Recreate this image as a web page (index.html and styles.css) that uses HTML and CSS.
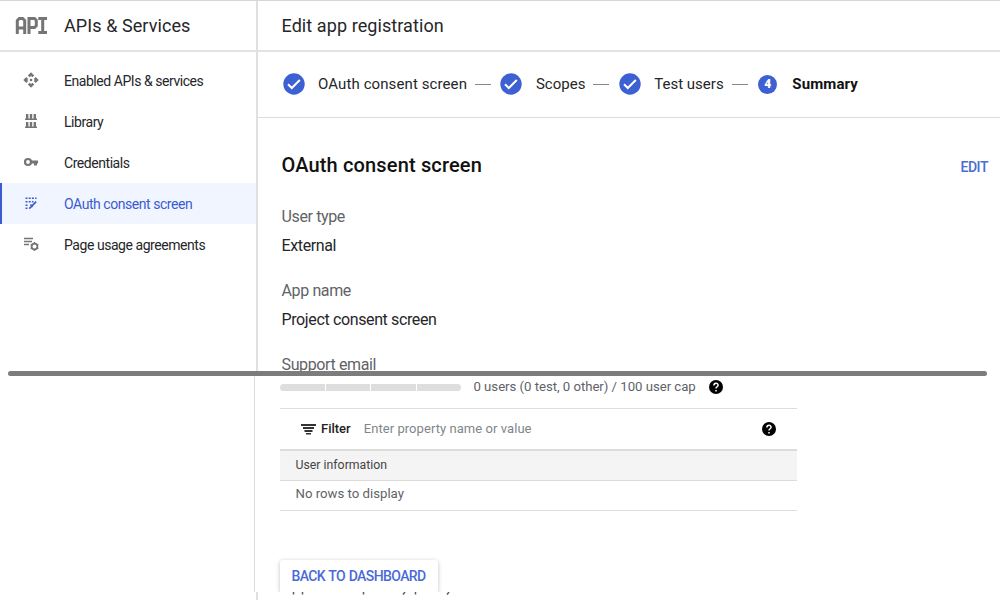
FILE: index.html
```html
<!DOCTYPE html>
<html lang="en">
<head>
<meta charset="utf-8">
<title>Edit app registration</title>
<link rel="stylesheet" href="styles.css">
</head>
<body>
<div class="page">
  <div class="upper">
    <aside class="sidebar">
      <header class="brand">
        <svg class="brand-icon" width="34" height="19" viewBox="0 0 34 19" fill="none" stroke="#757575" stroke-width="3"><path d="M2.300 18V4.500l2-2h3.400l2 2V18M2.300 12h7.400M14 18V2.500h5.500l1.800 1.800v5.400l-1.800 1.800H14M23.300 2.500H32M27.700 2.500v14M23.300 16.500H32"/></svg>
        <span class="brand-name">APIs &amp; Services</span>
      </header>
      <nav class="nav">
        <a class="item"><svg width="16" height="16" viewBox="0 0 16 16" fill="#757575"><path d="M8 .3l3.200 3.200-1.700 1.700L8 3.900 6.500 5.200 4.800 3.500zM8 15.700l3.200-3.200-1.700-1.700L8 12.100l-1.500-1.300-1.700 1.700zM.3 8l3-3 1.900 1.900L4.200 8l1 1.100L3.300 11zM15.700 8l-3-3-1.900 1.900 1 1.100-1 1.100 1.900 1.900z"/><circle cx="8" cy="8" r="1.300"/></svg><span>Enabled APIs &amp; services</span></a>
        <a class="item"><svg width="16" height="16" viewBox="0 0 16 16" fill="#757575"><path d="M3 1h2.400v4.500H3zM6.800 1h2.400v4.500H6.800zM10.600 1H13v4.500h-2.400zM2 5.500h12V7H2zM3 9h2.400v4.500H3zM6.800 9h2.400v4.500H6.800zM10.600 9H13v4.500h-2.400zM2 13.500h12V15H2z"/></svg><span>Library</span></a>
        <a class="item"><svg width="16" height="16" viewBox="0 0 16 16"><circle cx="5" cy="8" r="3" fill="none" stroke="#757575" stroke-width="2.200"/><path d="M8 6.600h7v2.800h-1v2h-3v-2H8z" fill="#757575"/></svg><span>Credentials</span></a>
        <a class="item active"><svg width="16" height="16" viewBox="0 0 16 16" fill="#3c5bd0"><path d="M2.500 2.500h2v1.600h-2zM5.700 2.500h2v1.600h-2zM8.900 2.500h2v1.600h-2zM12.100 2.500h1.500v1.600h-1.500zM2.500 6h2v1.600h-2zM5.700 6h2v1.600h-2zM8.900 6h1.600v1.600H8.900zM2.500 9.400h2V11h-2zM2.500 12.400h2v1.500h-2z"/><path d="M6.300 13.600l6.900-7M7.500 9.500l2 2.500" fill="none" stroke="#3c5bd0" stroke-width="1.600"/></svg><span>OAuth consent screen</span></a>
        <a class="item"><svg width="16" height="16" viewBox="0 0 16 16" fill="none" stroke="#757575" stroke-width="1.500"><path d="M1 2.500h9M1 5.500h8M1 8.500h5"/><circle cx="11.500" cy="10.500" r="2.900" stroke-width="1.800"/><path d="M11.500 6.100v1.600M11.500 13.400v1.700M7.700 8.300l1.400.8M13.900 11.900l1.400.8M7.700 12.700l1.400-.8M13.900 9.100l1.400-.8"/></svg><span>Page usage agreements</span></a>
      </nav>
    </aside>
    <main class="main">
      <header class="title"><span class="title-text">Edit app registration</span></header>
      <div class="stepper">
        <div class="step first"><svg class="dot" viewBox="0 0 22 22"><circle cx="11" cy="11" r="10.700"/><path d="M5 11.200l3.800 3.800 8-8"/></svg><span>OAuth consent screen</span></div>
        <i class="dash"></i>
        <div class="step"><svg class="dot" viewBox="0 0 22 22"><circle cx="11" cy="11" r="10.700"/><path d="M5 11.200l3.800 3.800 8-8"/></svg><span>Scopes</span></div>
        <i class="dash"></i>
        <div class="step"><svg class="dot" viewBox="0 0 22 22"><circle cx="11" cy="11" r="10.700"/><path d="M5 11.200l3.800 3.800 8-8"/></svg><span>Test users</span></div>
        <i class="dash"></i>
        <div class="step current"><b class="number">4</b><span>Summary</span></div>
      </div>
      <section class="details">
        <div class="head"><h2>OAuth consent screen</h2><a class="edit">EDIT</a></div>
        <dl class="fields">
          <dt>User type</dt><dd>External</dd>
          <dt>App name</dt><dd>Project consent screen</dd>
          <dt>Support email</dt>
        </dl>
      </section>
    </main>
  </div>
  <div class="divider"></div>
  <div class="lower">
    <div class="usage">
      <div class="meter"><i></i><i></i><i></i><i></i></div>
      <span>0 users (0 test, 0 other) / 100 user cap</span>
      <svg class="help" viewBox="0 0 14 14"><circle cx="7" cy="7" r="7"/><path d="M4.900 5.500C4.900 2.500 9.100 2.600 9.100 5.200 9.100 6.800 7 6.700 7 8.500"/><path d="M7 9.900v1.600"/></svg>
    </div>
    <div class="table">
      <div class="filter"><svg width="15" height="12" viewBox="0 0 15 12" fill="#333"><path d="M0 1h15v2H0zM2 4h11v2H2zM3.500 7h8v2h-8zM5 10h5v1.500H5z"/></svg><span class="filter-label">Filter</span><span class="filter-hint">Enter property name or value</span><svg class="help" viewBox="0 0 14 14"><circle cx="7" cy="7" r="7"/><path d="M4.900 5.500C4.900 2.500 9.100 2.600 9.100 5.200 9.100 6.800 7 6.700 7 8.500"/><path d="M7 9.900v1.600"/></svg></div>
      <div class="thead">User information</div>
      <div class="trow">No rows to display</div>
    </div>
    <div class="actions"><a class="button">BACK TO DASHBOARD</a></div>
  </div>
  <div class="tail">
    <svg width="170" height="3" viewBox="0 0 170 3" fill="none" stroke="#54606b" stroke-width="1.500"><path d="M1.500 0v2.500M10.500 0v2.500M71.500 0v2.500M113 0l-2 2.500M123.500 0v2.500M157 0l-2 2.500"/></svg>
  </div>
</div>
</body>
</html>
```
FILE: styles.css
```css
*{box-sizing:border-box}
body{margin:0;background:#fff;font-family:Roboto,"Liberation Sans",sans-serif;color:#252629;white-space:nowrap}
.page{width:1000px;height:600px;overflow:hidden;display:flex;flex-direction:column}
.upper{height:371px;display:grid;grid-template-columns:258px 1fr;border-top:1px solid #d5d6db;overflow:hidden}
.sidebar{border-right:2px solid #dfe0e2}
.brand{height:51px;border-bottom:2px solid #e3e3e3;display:flex;align-items:center;padding-left:15px;gap:15px}
.brand-name,.title-text{font-size:18px;letter-spacing:.08px}
.nav{padding-top:8px}
.item{height:41px;display:flex;align-items:center;padding:0 0 1px 23px;gap:25px;font-size:14px;letter-spacing:-.45px}
.item span{padding-top:1px}
.item.active{background:#f0f5ff;border-left:2px solid #3c5bd0;padding-left:21px;color:#3c5bd0}
.title{height:51px;border-bottom:2px solid #e3e3e3;display:flex;align-items:center;padding-left:23.5px}
.stepper{height:66px;border-bottom:1px solid #dcdcdc;display:flex;align-items:center;padding:0 0 1px 24.5px;font-size:15px}
.step{display:flex;align-items:center;gap:13.5px}
.step span{padding-bottom:1px}
.first{letter-spacing:.1px}
.dot{width:22px;height:22px;fill:#3d61d2}
.dot path{fill:none;stroke:#fff;stroke-width:2}
.dash{width:16px;height:1px;background:#888;margin:0 9.500px 0 7.900px}
.number{width:19px;height:19px;border-radius:50%;background:#3d61d2;color:#fff;font-size:12px;line-height:19px;text-align:center;letter-spacing:0}
.current{margin-left:1.3px;font-weight:700;color:#111;letter-spacing:.12px;gap:15px}
.details{padding:32px 12px 0 23.5px}
.head{display:flex;justify-content:space-between;align-items:center;height:30px}
h2{margin:0;font-size:20px;font-weight:500;color:#111;letter-spacing:.15px}
.edit{padding-top:3px;font-size:14px;font-weight:500;color:#4a6bd6;letter-spacing:-.45px}
.fields{margin:22px 0 0;font-size:16px;letter-spacing:-.37px}
dt{height:29px;line-height:29px;color:#5f6368}
dd{margin:0 0 16px;height:29px;line-height:30px}
.divider{height:5px;flex:none;margin:0 13px 0 8px;border-radius:3px;background:#7c7c7c}
.lower{height:216px;margin-left:254px;border-left:1px solid #dcdcdc;padding:0 203px 0 25px;overflow:hidden}
.usage{height:32px;padding-bottom:10px;display:flex;align-items:center;font-size:13.2px;letter-spacing:-.03px;color:#5f6368}
.usage span{padding-bottom:1px}
.meter{display:flex;gap:1px;width:181px;height:7px;border-radius:4px;overflow:hidden;margin-right:12.5px}
.meter i{flex:1;background:#dedede}
.help{width:14px;height:14px;margin-left:13px;fill:#000}
.help path{fill:none;stroke:#fff;stroke-width:1.5}
.table{border-top:1px solid #dedede;font-size:13px}
.filter{height:40px;display:flex;align-items:center;padding:0 21px 1px 20.5px}
.filter .help{margin-left:auto}
.filter-label{font-weight:500;margin:0 13px 0 5.5px;color:#222}
.filter-hint{color:#80868b;letter-spacing:.06px}
.thead{height:32px;background:#f4f4f4;border-top:2px solid #dcdcdc;border-bottom:1px solid #dcdcdc;display:flex;align-items:center;padding:0 0 1px 15.5px;font-size:12.3px;color:#444}
.trow{height:30px;border-bottom:1px solid #dedede;display:flex;align-items:center;padding:0 0 4px 15.5px;font-size:13.2px;color:#5f6368}
.actions{padding-top:49px}
.button{width:158px;height:33px;display:flex;align-items:center;padding:0 0 1px 11.5px;border-radius:3px;box-shadow:0 1px 4px rgba(0,0,0,.25);color:#4a6bd6;font-size:14px;font-weight:500;letter-spacing:-.6px;word-spacing:.7px}
.tail{height:8px;margin-left:256px;border-left:2px solid #dfe0e2;padding-left:34px}
.tail svg{display:block}
```
